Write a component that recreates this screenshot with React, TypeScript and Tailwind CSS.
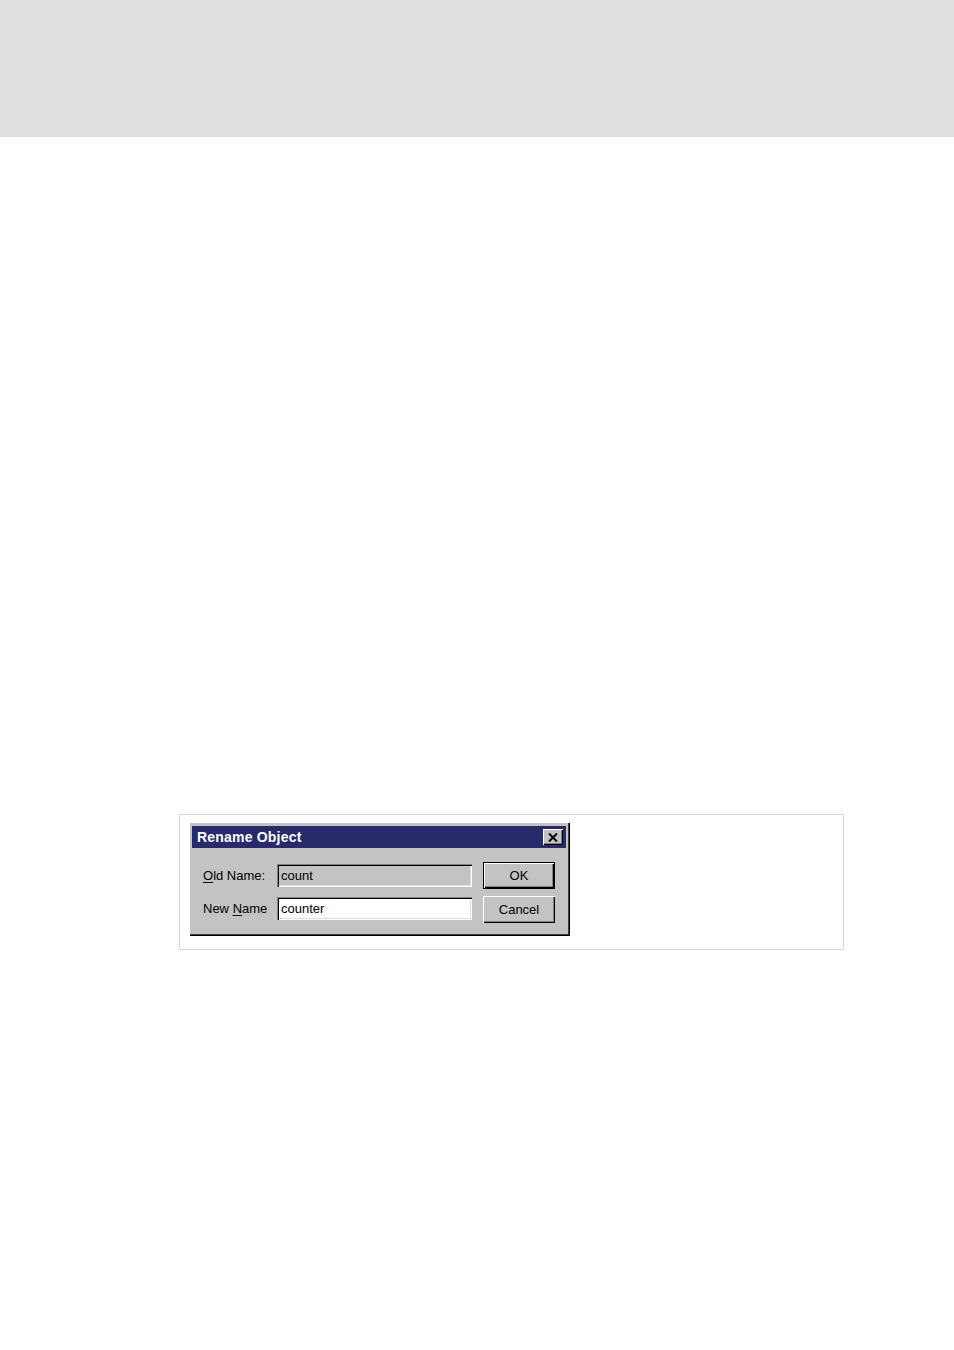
import React from 'react';

const font = { fontFamily: '"Liberation Sans", Arial, sans-serif' };

function Field({ value, readOnly }: { value: string; readOnly?: boolean }) {
  return (
    <div
      className={`w-[195px] h-[23px] flex items-center pl-[4px] text-[13px] text-black shadow-[inset_1px_1px_0_#808080,inset_2px_2px_0_#000,inset_-1px_-1px_0_#fff,inset_-2px_-2px_0_#dfdfdf] ${
        readOnly ? 'bg-[#c3c3c3]' : 'bg-white'
      }`}
    >
      {value}
    </div>
  );
}

function Button({ label, isDefault }: { label: string; isDefault?: boolean }) {
  return (
    <div
      className={`w-[72px] h-[27px] flex items-center justify-center text-[13px] text-black bg-[#c3c3c3] ${
        isDefault
          ? 'shadow-[inset_0_0_0_1px_#000,inset_2px_2px_0_#fff,inset_-2px_-2px_0_#000,inset_-3px_-3px_0_#808080]'
          : 'shadow-[inset_1px_1px_0_#fff,inset_-1px_-1px_0_#000,inset_-2px_-2px_0_#808080]'
      }`}
    >
      {label}
    </div>
  );
}

export default function App() {
  return (
    <div className="w-[954px] min-h-[1350px] bg-white" style={font}>
      <div className="h-[137px] bg-[#e0e0e0]" />

      <div className="ml-[179px] mt-[677px] w-[665px] h-[136px] border border-[#d6d6d6] pt-[8px] pl-[10px]">
        <div className="w-[380px] h-[113px] bg-[#c3c3c3] pt-[3px] pl-[2px] pr-[2px] shadow-[inset_-1px_-1px_0_#000,inset_-2px_-2px_0_#404040]">
          <div className="h-[22px] w-[374px] bg-[#272a6b] flex items-center justify-between pl-[5px] pr-[3px]">
            <span className="text-white font-bold text-[14px] tracking-[0.2px]">Rename Object</span>
            <div className="w-[20px] h-[16px] bg-[#c3c3c3] flex items-center justify-center shadow-[inset_1px_1px_0_#fff,inset_-1px_-1px_0_#000,inset_-2px_-2px_0_#808080]">
              <svg width="10" height="9" viewBox="0 0 10 9">
                <path d="M1 0.5 L9 8.5 M9 0.5 L1 8.5" stroke="#000" strokeWidth="2" />
              </svg>
            </div>
          </div>

          <div className="flex pl-[11px] pt-[14px]">
            <div className="flex flex-col gap-[10px] pt-[2px]">
              <div className="flex items-center">
                <span className="w-[74px] text-[13px] text-black">
                  <span className="underline underline-offset-2">O</span>ld Name:
                </span>
                <Field value="count" readOnly />
              </div>
              <div className="flex items-center">
                <span className="w-[74px] text-[13px] text-black">
                  New <span className="underline underline-offset-2">N</span>ame
                </span>
                <Field value="counter" />
              </div>
            </div>
            <div className="flex flex-col gap-[7px] ml-[11px]">
              <Button label="OK" isDefault />
              <Button label="Cancel" />
            </div>
          </div>
        </div>
      </div>
    </div>
  );
}
